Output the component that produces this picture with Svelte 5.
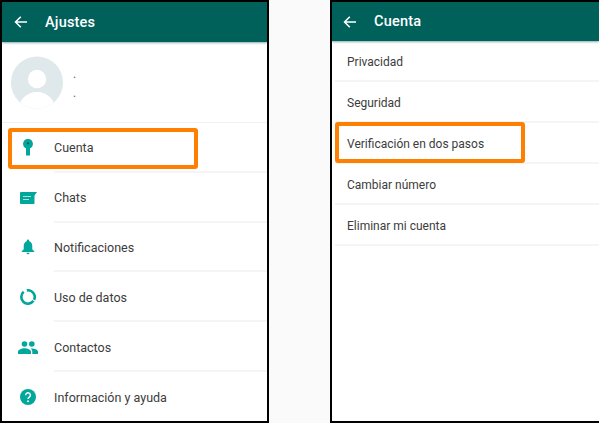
<script>
  const settings = [
    { label: 'Cuenta', icon: 'key' },
    { label: 'Chats', icon: 'chat' },
    { label: 'Notificaciones', icon: 'bell' },
    { label: 'Uso de datos', icon: 'data' },
    { label: 'Contactos', icon: 'people' },
    { label: 'Información y ayuda', icon: 'help' }
  ];
  const account = ['Privacidad', 'Seguridad', 'Verificación en dos pasos', 'Cambiar número', 'Eliminar mi cuenta'];
</script>

{#snippet back()}
  <svg class="back" width="13" height="14" viewBox="0 0 13 14" fill="none" stroke="#fff" stroke-width="1.5">
    <path d="M13 7H1.500M6.800 1.700 1.500 7l5.300 5.300" />
  </svg>
{/snippet}

<div class="page">
  <section class="phone left">
    <header class="bar">
      {@render back()}
      <h1>Ajustes</h1>
    </header>
    <div class="profile">
      <svg class="avatar" width="52" height="53" viewBox="0 0 52 53">
        <defs><clipPath id="c"><circle cx="26" cy="26.5" r="26" /></clipPath></defs>
        <circle cx="26" cy="26.5" r="26" fill="#dfe8eb" />
        <g clip-path="url(#c)" fill="#fff">
          <circle cx="26" cy="23" r="9.200" />
          <ellipse cx="26" cy="54" rx="18.500" ry="18" />
        </g>
      </svg>
      <div class="dots"><span>.</span><span>.</span></div>
    </div>
    <ul class="settings">
      {#each settings as s}
        <li>
          <span class="icon">
            {#if s.icon === 'key'}
              <svg width="10" height="17" viewBox="0 0 10 17"><path fill="#00a79a" d="M5 0a4.800 4.800 0 0 1 2 9.200V16.500H3V9.200A4.800 4.800 0 0 1 5 0Z" /><circle cx="5" cy="4.300" r="1.100" fill="#07505a" /></svg>
            {:else if s.icon === 'chat'}
              <svg width="17" height="12" viewBox="0 0 17 12"><path fill="#00a79a" d="M1 0h16l-2.500 3.500V11a1 1 0 0 1-1 1H1a1 1 0 0 1-1-1V1a1 1 0 0 1 1-1Z" /><path stroke="#a5e3dd" stroke-width="1.100" d="M3 4.500h8M3 7.500h6" /></svg>
            {:else if s.icon === 'bell'}
              <svg width="14" height="16" viewBox="0 0 15 18"><path fill="#00a79a" d="M7.500 0.500a1.300 1.300 0 0 1 1.300 1.300v.6C11 3 12.300 5 12.300 7.500v4l2.200 2.300v.9H.5v-.9l2.200-2.300v-4C2.700 5 4 3 6.200 2.400v-.6A1.300 1.300 0 0 1 7.500.5ZM5.800 15.500h3.400a1.700 1.700 0 0 1-3.400 0Z" /></svg>
            {:else if s.icon === 'data'}
              <svg width="16" height="16" viewBox="0 0 16 16" fill="none" stroke="#00a79a" stroke-width="2.600"><path d="M6.840 1.400A6.700 6.700 0 0 1 14.070 10.830" /><path d="M13.490 11.840A6.700 6.700 0 1 1 3.690 2.870" /></svg>
            {:else if s.icon === 'people'}
              <svg width="20" height="13" viewBox="0 0 20 13" fill="#00a79a"><circle cx="6.500" cy="3" r="2.800" /><circle cx="13.800" cy="3" r="2.800" /><path d="M0 13v-2.200C0 8.500 4 7.200 6.500 7.200S13 8.500 13 10.800V13ZM14.300 13v-2.200c0-1.300-.6-2.400-1.500-3.300 .4-.1.800-.1 1.100-.1 2.200 0 6.100 1.100 6.100 3.400V13Z" /></svg>
            {:else}
              <svg width="16" height="16" viewBox="0 0 16 16"><circle cx="8" cy="8" r="8" fill="#00a79a" /><path d="M5.600 6.200a2.400 2.400 0 1 1 3.700 2c-.9.600-1.300 1-1.300 1.900" fill="none" stroke="#fff" stroke-width="1.500" /><circle cx="8" cy="12.200" r=".95" fill="#fff" /></svg>
            {/if}
          </span>
          <span class="label">{s.label}</span>
        </li>
      {/each}
    </ul>
    <div class="mark mark-left"></div>
  </section>

  <section class="phone right">
    <header class="bar">
      {@render back()}
      <h1>Cuenta</h1>
    </header>
    <ul class="account">
      {#each account as a}
        <li>{a}</li>
      {/each}
    </ul>
    <div class="mark mark-right"></div>
  </section>
</div>

<style>
  :global(body) {
    margin: 0;
    background: #fafafa;
  }
  .page {
    display: flex;
    justify-content: space-between;
    width: 599px;
    height: 423px;
    overflow: hidden;
    font-family: Roboto, "Liberation Sans", sans-serif;
    color: #3c3c3c;
  }
  .phone {
    position: relative;
    box-sizing: border-box;
    height: 423px;
    background: #fff;
    border: 2px solid #000;
    overflow: hidden;
  }
  .left {
    width: 269px;
  }
  .right {
    width: 269px;
    border-right: 0;
  }
  .bar {
    display: flex;
    align-items: center;
    height: 39px;
    background: #00605a;
    box-shadow: 0 1px 2px rgba(0, 70, 65, 0.45);
    color: #fff;
  }
  .left .bar {
    height: 40px;
  }
  .back {
    margin-left: 12px;
    flex: none;
  }
  .right .back {
    margin-left: 11px;
  }
  .bar h1 {
    margin: 0 0 0 18px;
    font-size: 14.500px;
    font-weight: 500;
    letter-spacing: 0.2px;
  }
  .profile {
    display: flex;
    align-items: center;
    height: 81px;
    padding-left: 9px;
    border-bottom: 1px solid #f2f2f2;
    box-sizing: border-box;
  }
  .dots {
    display: flex;
    flex-direction: column;
    margin-left: 10px;
    padding-top: 4px;
    font-size: 12px;
    line-height: 19px;
    color: #666;
  }
  .settings,
  .account {
    list-style: none;
    margin: 0;
    padding: 0;
  }
  .settings li {
    display: flex;
    align-items: center;
    height: 49.800px;
    font-size: 12.500px;
  }
  .icon {
    display: flex;
    justify-content: center;
    align-items: center;
    flex: none;
    width: 52px;
  }
  .label {
    flex: 1;
    align-self: stretch;
    display: flex;
    align-items: center;
    border-bottom: 2px solid #f5f5f5;
    box-sizing: border-box;
    padding-top: 2px;
  }
  .settings li:last-child .label {
    border-bottom: 0;
  }
  .icon svg {
    display: block;
  }
  .account {
    margin-left: 3px;
  }
  .account li {
    display: flex;
    align-items: center;
    box-sizing: border-box;
    height: 41px;
    padding: 2px 0 0 12px;
    font-size: 12px;
    border-bottom: 2px solid #f5f5f5;
  }
  .mark {
    position: absolute;
    box-sizing: border-box;
    border: 4px solid #ff8000;
    border-radius: 3px;
  }
  .mark-left {
    left: 6px;
    top: 126px;
    width: 190px;
    height: 41px;
  }
  .mark-right {
    left: 3px;
    top: 120px;
    width: 190px;
    height: 41px;
  }
</style>
